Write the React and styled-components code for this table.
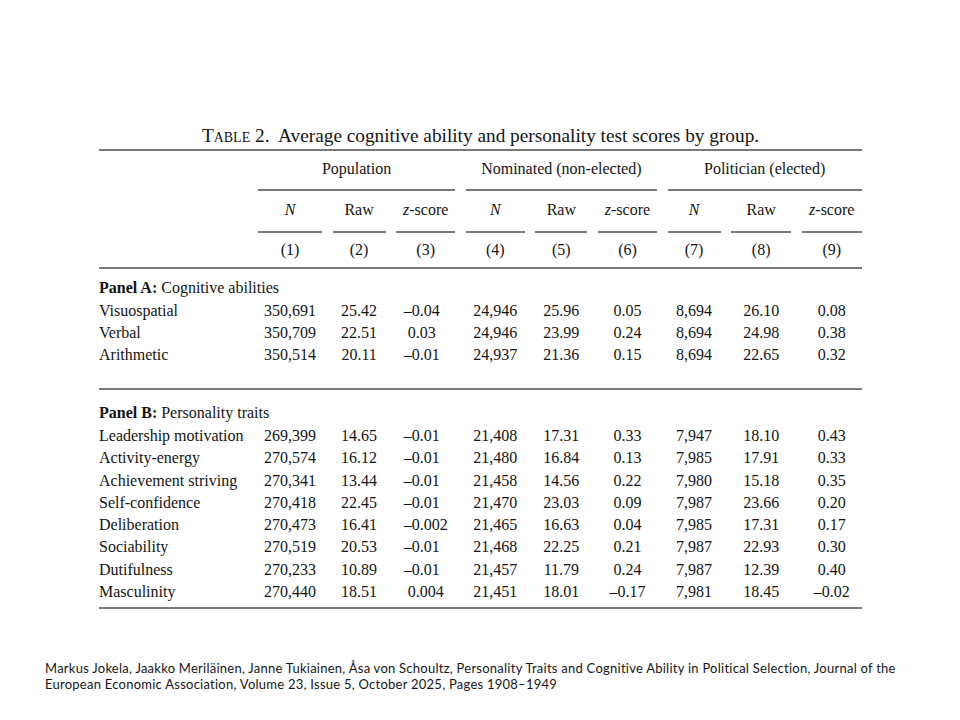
import React from 'react';
import styled, { createGlobalStyle } from 'styled-components';

const GlobalStyle = createGlobalStyle`
  html, body {
    margin: 0;
    padding: 0;
    background: #fff;
  }
`;

const COLS = '148.4px 64px 53px 59px 59px 52px 59px 53px 60px 60px';
const RULE = '#7a7a7a';

const Page = styled.div`
  width: 960px;
  height: 720px;
  box-sizing: border-box;
  padding-top: 125px;
  font-family: 'Liberation Serif', 'Times New Roman', serif;
  color: #141414;
  overflow: hidden;
`;

const TableBlock = styled.div`
  margin-left: 99px;
  width: 763px;
`;

const Caption = styled.div`
  font-size: 19.3px;
  line-height: 22px;
  text-align: center;
  white-space: nowrap;
  margin-bottom: 2px;
`;

const SmallCaps = styled.span`
  font-variant: small-caps;
`;

const Rule = styled.div`
  height: 2px;
  background: ${RULE};
  margin-top: ${(p) => p.$top || 0}px;
`;

const Row = styled.div`
  display: grid;
  grid-template-columns: ${COLS};
  column-gap: 10.6px;
  font-size: 16px;
  line-height: ${(p) => p.$lh || 22}px;
  margin-top: ${(p) => p.$top || 0}px;
`;

const HeadCell = styled.div`
  grid-column: ${(p) => (p.$span ? `span ${p.$span}` : 'auto')};
  text-align: center;
  white-space: nowrap;
  padding-top: ${(p) => p.$pt}px;
  padding-bottom: ${(p) => p.$pb}px;
  border-bottom: ${(p) => (p.$ruled ? `2px solid ${RULE}` : 'none')};
`;

const Label = styled.div`
  text-align: left;
  white-space: nowrap;
`;

const Num = styled.div`
  text-align: center;
  white-space: nowrap;
`;

const PanelTitle = styled.div`
  grid-column: 1 / -1;
  font-size: 16px;
  line-height: 22px;
  margin-top: ${(p) => p.$top}px;
  margin-bottom: 1px;
  b {
    font-weight: bold;
  }
`;

const Phantom = styled.span`
  visibility: hidden;
`;

const Footer = styled.div`
  margin: 51px 0 0 45px;
  font-family: Lato, 'Open Sans', sans-serif;
  font-size: 13px;
  letter-spacing: 0.25px;
  line-height: 16px;
  white-space: nowrap;
  color: #161616;
`;

const panelA = [
  ['Visuospatial', '350,691', '25.42', '–0.04', '24,946', '25.96', '0.05', '8,694', '26.10', '0.08'],
  ['Verbal', '350,709', '22.51', '0.03', '24,946', '23.99', '0.24', '8,694', '24.98', '0.38'],
  ['Arithmetic', '350,514', '20.11', '–0.01', '24,937', '21.36', '0.15', '8,694', '22.65', '0.32'],
];

const panelB = [
  ['Leadership motivation', '269,399', '14.65', '–0.01', '21,408', '17.31', '0.33', '7,947', '18.10', '0.43'],
  ['Activity-energy', '270,574', '16.12', '–0.01', '21,480', '16.84', '0.13', '7,985', '17.91', '0.33'],
  ['Achievement striving', '270,341', '13.44', '–0.01', '21,458', '14.56', '0.22', '7,980', '15.18', '0.35'],
  ['Self-confidence', '270,418', '22.45', '–0.01', '21,470', '23.03', '0.09', '7,987', '23.66', '0.20'],
  ['Deliberation', '270,473', '16.41', '–0.002', '21,465', '16.63', '0.04', '7,985', '17.31', '0.17'],
  ['Sociability', '270,519', '20.53', '–0.01', '21,468', '22.25', '0.21', '7,987', '22.93', '0.30'],
  ['Dutifulness', '270,233', '10.89', '–0.01', '21,457', '11.79', '0.24', '7,987', '12.39', '0.40'],
  ['Masculinity', '270,440', '18.51', '0.004', '21,451', '18.01', '–0.17', '7,981', '18.45', '–0.02'],
];

const groups = ['Population', 'Nominated (non-elected)', 'Politician (elected)'];

// column (3) is aligned on the decimal point, so short values get a hidden digit
const renderValue = (v, i) => {
  if (i === 3 && v.split('.')[1].length < 3) {
    return (
      <>
        {v}
        <Phantom>0</Phantom>
      </>
    );
  }
  return v;
};

const DataRow = ({ row, lh }) => (
  <Row $lh={lh}>
    <Label>{row[0]}</Label>
    {row.slice(1).map((v, i) => (
      <Num key={i}>{renderValue(v, i + 1)}</Num>
    ))}
  </Row>
);

const SubHeads = () => (
  <Row>
    <div />
    {groups.map((g) => (
      <React.Fragment key={g}>
        <HeadCell $pt={8} $pb={10} $ruled>
          <i>N</i>
        </HeadCell>
        <HeadCell $pt={8} $pb={10} $ruled>
          Raw
        </HeadCell>
        <HeadCell $pt={8} $pb={10} $ruled>
          <i>z</i>-score
        </HeadCell>
      </React.Fragment>
    ))}
  </Row>
);

const App = () => (
  <Page>
    <GlobalStyle />
    <TableBlock>
      <Caption>
        T<SmallCaps>able</SmallCaps> 2.&nbsp; Average cognitive ability and personality test
        scores by group.
      </Caption>
      <Rule />
      <Row>
        <div />
        {groups.map((g) => (
          <HeadCell key={g} $span={3} $pt={7} $pb={9} $ruled>
            {g}
          </HeadCell>
        ))}
      </Row>
      <SubHeads />
      <Row>
        <div />
        {[1, 2, 3, 4, 5, 6, 7, 8, 9].map((n) => (
          <HeadCell key={n} $pt={6} $pb={6}>
            ({n})
          </HeadCell>
        ))}
      </Row>
      <Rule />

      <PanelTitle $top={8}>
        <b>Panel A:</b> Cognitive abilities
      </PanelTitle>
      {panelA.map((r) => (
        <DataRow key={r[0]} row={r} lh={22} />
      ))}
      <Rule $top={22} />

      <PanelTitle $top={12}>
        <b>Panel B:</b> Personality traits
      </PanelTitle>
      {panelB.map((r) => (
        <DataRow key={r[0]} row={r} lh={22.3} />
      ))}
      <Rule $top={3.6} />
    </TableBlock>

    <Footer>
      Markus Jokela, Jaakko Meriläinen, Janne Tukiainen, Åsa von Schoultz, Personality Traits and
      Cognitive Ability in Political Selection, Journal of the
      <br />
      European Economic Association, Volume 23, Issue 5, October 2025, Pages 1908–1949
    </Footer>
  </Page>
);

export default App;
